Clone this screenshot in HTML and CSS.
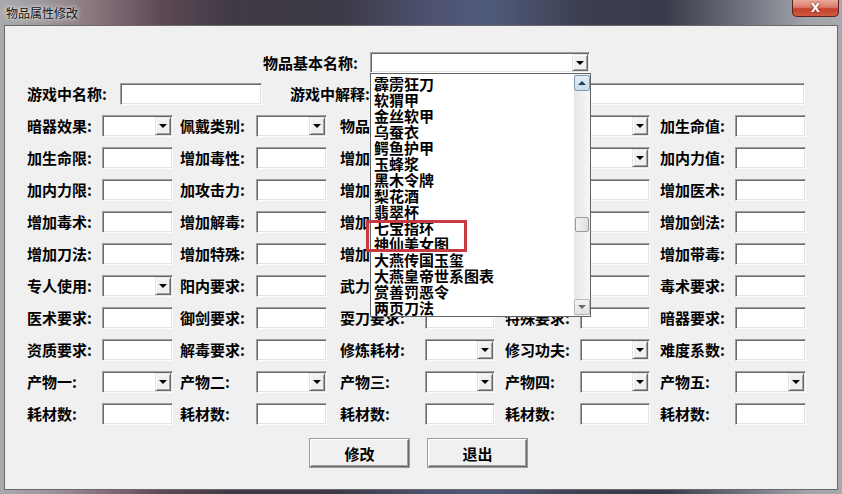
FILE: index.html
```html
<!DOCTYPE html>
<html>

<head>
    <title>物品属性修改</title>
    <meta charset="utf-8">
    <link rel="stylesheet" href="styles.css">
</head>

<body>
    <div class="window">
        <div class="titlebar">
            <span class="title">物品属性修改</span>
            <button class="close">X</button>
        </div>

        <div class="client">

            <div class="namerow">
                <span class="lbl">物品基本名称:</span>
                <div class="box combo big">
                    <span class="arrow"></span>

                    <div class="list">
                        <ul class="items">
                            <li>霹雳狂刀</li>
                            <li>软猬甲</li>
                            <li>金丝软甲</li>
                            <li>乌蚕衣</li>
                            <li>鳄鱼护甲</li>
                            <li>玉蜂浆</li>
                            <li>黑木令牌</li>
                            <li>梨花酒</li>
                            <li>翡翠杯</li>
                            <li>七宝指环</li>
                            <li>神仙美女图</li>
                            <li>大燕传国玉玺</li>
                            <li>大燕皇帝世系图表</li>
                            <li>赏善罚恶令</li>
                            <li>两页刀法</li>
                        </ul>
                        <div class="scroll">
                            <span class="sbtn up"></span>
                            <span class="thumb"></span>
                            <span class="sbtn down"></span>
                        </div>
                    </div>
                    <div class="mark"></div>
                </div>
            </div>

            <div class="row wide">
                <span class="lbl">游戏中名称:</span>
                <input class="box" type="text">
                <span class="lbl">游戏中解释:</span>
                <input class="box" type="text">
            </div>

            <div class="row">
                <span class="lbl">暗器效果:</span>
                <div class="box combo"><span class="arrow"></span></div>
                <span class="lbl">佩戴类别:</span>
                <div class="box combo"><span class="arrow"></span></div>
                <span class="lbl">物品类型:</span>
                <div class="box combo"><span class="arrow"></span></div>
                <span class="lbl">人物限制:</span>
                <div class="box combo"><span class="arrow"></span></div>
                <span class="lbl">加生命值:</span>
                <input class="box" type="text">
            </div>

            <div class="row">
                <span class="lbl">加生命限:</span>
                <input class="box" type="text">
                <span class="lbl">增加毒性:</span>
                <input class="box" type="text">
                <span class="lbl">增加体力:</span>
                <input class="box" type="text">
                <span class="lbl">内力性质:</span>
                <div class="box combo"><span class="arrow"></span></div>
                <span class="lbl">加内力值:</span>
                <input class="box" type="text">
            </div>

            <div class="row">
                <span class="lbl">加内力限:</span>
                <input class="box" type="text">
                <span class="lbl">加攻击力:</span>
                <input class="box" type="text">
                <span class="lbl">增加轻功:</span>
                <input class="box" type="text">
                <span class="lbl">增加防御:</span>
                <input class="box" type="text">
                <span class="lbl">增加医术:</span>
                <input class="box" type="text">
            </div>

            <div class="row">
                <span class="lbl">增加毒术:</span>
                <input class="box" type="text">
                <span class="lbl">增加解毒:</span>
                <input class="box" type="text">
                <span class="lbl">增加抗毒:</span>
                <input class="box" type="text">
                <span class="lbl">增加拳掌:</span>
                <input class="box" type="text">
                <span class="lbl">增加剑法:</span>
                <input class="box" type="text">
            </div>

            <div class="row">
                <span class="lbl">增加刀法:</span>
                <input class="box" type="text">
                <span class="lbl">增加特殊:</span>
                <input class="box" type="text">
                <span class="lbl">增加暗器:</span>
                <input class="box" type="text">
                <span class="lbl">增加常识:</span>
                <input class="box" type="text">
                <span class="lbl">增加带毒:</span>
                <input class="box" type="text">
            </div>

            <div class="row">
                <span class="lbl">专人使用:</span>
                <div class="box combo"><span class="arrow"></span></div>
                <span class="lbl">阳内要求:</span>
                <input class="box" type="text">
                <span class="lbl">武力要求:</span>
                <input class="box" type="text">
                <span class="lbl">轻功要求:</span>
                <input class="box" type="text">
                <span class="lbl">毒术要求:</span>
                <input class="box" type="text">
            </div>

            <div class="row">
                <span class="lbl">医术要求:</span>
                <input class="box" type="text">
                <span class="lbl">御剑要求:</span>
                <input class="box" type="text">
                <span class="lbl">耍刀要求:</span>
                <input class="box" type="text">
                <span class="lbl">特殊要求:</span>
                <input class="box" type="text">
                <span class="lbl">暗器要求:</span>
                <input class="box" type="text">
            </div>

            <div class="row">
                <span class="lbl">资质要求:</span>
                <input class="box" type="text">
                <span class="lbl">解毒要求:</span>
                <input class="box" type="text">
                <span class="lbl">修炼耗材:</span>
                <div class="box combo"><span class="arrow"></span></div>
                <span class="lbl">修习功夫:</span>
                <div class="box combo"><span class="arrow"></span></div>
                <span class="lbl">难度系数:</span>
                <input class="box" type="text">
            </div>

            <div class="row">
                <span class="lbl">产物一:</span>
                <div class="box combo"><span class="arrow"></span></div>
                <span class="lbl">产物二:</span>
                <div class="box combo"><span class="arrow"></span></div>
                <span class="lbl">产物三:</span>
                <div class="box combo"><span class="arrow"></span></div>
                <span class="lbl">产物四:</span>
                <div class="box combo"><span class="arrow"></span></div>
                <span class="lbl">产物五:</span>
                <div class="box combo"><span class="arrow"></span></div>
            </div>

            <div class="row">
                <span class="lbl">耗材数:</span>
                <input class="box" type="text">
                <span class="lbl">耗材数:</span>
                <input class="box" type="text">
                <span class="lbl">耗材数:</span>
                <input class="box" type="text">
                <span class="lbl">耗材数:</span>
                <input class="box" type="text">
                <span class="lbl">耗材数:</span>
                <input class="box" type="text">
            </div>

            <div class="actions">
                <button class="btn">修改</button>
                <button class="btn">退出</button>
            </div>

        </div>
    </div>
</body>

</html>
```

FILE: styles.css
```css
* {
    box-sizing: border-box;
}

body {
    margin: 0;
    font-family: "Noto Sans CJK SC", sans-serif;
}

.window {
    width: 842px;
    height: 494px;
    display: flex;
    flex-direction: column;
    padding: 0 4px 4px 4px;
    background: linear-gradient(90deg, #a9aaae 0%, #9a9498 6%, #86707a 12%, #5e4a56 19%, #413a46 27%, #3d3a47 40%, #4d5270 51%, #4f5b7b 58%, #3c3d4d 70%, #3a3b4a 79%, #6e707e 88%, #a2a3aa 96%, #a8a9ae 100%);
}

.titlebar {
    height: 25px;
    display: flex;
    justify-content: space-between;
    align-items: flex-start;
}

.title {
    font-size: 12px;
    line-height: 15px;
    color: #141414;
    padding: 5px 0 0 2px;
    text-shadow: 0 0 6px rgba(255, 255, 255, 0.9), 0 0 3px rgba(255, 255, 255, 0.7);
}

.close {
    width: 47px;
    height: 17px;
    margin-right: -1px;
    padding: 0;
    border: 1px solid #5e2219;
    border-top: none;
    border-radius: 0 0 5px 5px;
    background: linear-gradient(#e9ab9d, #da7a66 45%, #c4412d 55%, #cf5a40);
    color: #fff;
    font: bold 12px "DejaVu Sans", sans-serif;
    line-height: 16px;
    text-shadow: 0 0 2px #5a1a12;
}

.client {
    flex: 1;
    background-color: #f0f0f0;
    border: 1px solid #6a6a6a;
}

.lbl {
    font-size: 15px;
    font-weight: 700;
    color: #000;
    white-space: nowrap;
    line-height: 22px;
}

.box {
    height: 22px;
    width: 100%;
    margin: 0;
    padding: 0;
    background-color: #fff;
    border: 1px solid;
    border-color: #a0a0a0 #fdfdfd #fdfdfd #a0a0a0;
    box-shadow: inset 1px 1px 0 #6a6a6a, inset -1px -1px 0 #e3e3e3;
    font-family: inherit;
    outline: none;
}

.combo {
    display: flex;
    justify-content: flex-end;
    padding: 1px;
}

.arrow {
    width: 16px;
    height: 100%;
    display: flex;
    align-items: center;
    justify-content: center;
    background-color: #f0f0f0;
    border: 1px solid;
    border-color: #e3e3e3 #6a6a6a #6a6a6a #e3e3e3;
    box-shadow: inset 1px 1px 0 #fff, inset -1px -1px 0 #a0a0a0;
}

.arrow::after {
    content: "";
    width: 0;
    height: 0;
    border-left: 4px solid transparent;
    border-right: 4px solid transparent;
    border-top: 4px solid #000;
}

/* top combobox with open list */

.namerow {
    display: flex;
    align-items: center;
    height: 21px;
    margin-top: 26px;
    padding-left: 258px;
}

.namerow .lbl {
    width: 107px;
}

.big {
    position: relative;
    width: 220px;
    height: 21px;
}

.list {
    position: absolute;
    top: 20px;
    left: -1px;
    width: 221px;
    height: 244px;
    display: flex;
    background-color: #fff;
    border: 1px solid #646464;
    z-index: 2;
}

.items {
    flex: 1;
    list-style: none;
    margin: 0;
    padding: 2px 0 0 3px;
}

.items li {
    font-size: 15px;
    font-weight: 700;
    line-height: 16px;
    height: 16px;
    white-space: nowrap;
}

.scroll {
    width: 16px;
    display: flex;
    flex-direction: column;
    background: linear-gradient(90deg, #e8e8e8, #f6f6f6);
}

.sbtn {
    height: 16px;
    display: flex;
    align-items: center;
    justify-content: center;
    border: 1px solid #a6b4c4;
    border-radius: 2px;
}

.up {
    margin-top: 1px;
    background: linear-gradient(#e4eef8, #c8dcee);
    border-color: #7d98b4;
}

.up::after {
    content: "";
    border-left: 4px solid transparent;
    border-right: 4px solid transparent;
    border-bottom: 4px solid #2a3e54;
}

.down {
    margin-top: auto;
    margin-bottom: 1px;
    background: linear-gradient(#f4f4f4, #e2e2e2);
    border-color: #b8b8b8;
}

.down::after {
    content: "";
    border-left: 4px solid transparent;
    border-right: 4px solid transparent;
    border-top: 4px solid #6a6a6a;
}

.thumb {
    height: 15px;
    margin: 126px 1px 0 1px;
    background: linear-gradient(90deg, #f2f2f2, #dedede);
    border: 1px solid #9a9a9a;
    border-radius: 2px;
}

.mark {
    position: absolute;
    left: -5px;
    top: 167px;
    width: 101px;
    height: 32px;
    border: 3px solid #c63a40;
    z-index: 3;
}

/* grid rows */

.row {
    display: grid;
    grid-template-columns: 75px 71px 83px 71px 98px 70px 85px 70px 85px 71px;
    align-items: center;
    height: 22px;
    margin-top: 10px;
    padding-left: 22px;
}

.row .lbl:nth-child(3) {
    padding-left: 7px;
}

.row .lbl:nth-child(5) {
    padding-left: 13px;
}

.row .lbl:nth-child(7),
.row .lbl:nth-child(9) {
    padding-left: 10px;
}

.row.wide {
    grid-template-columns: 93px 142px 110px 433px;
}

.row.wide .lbl:nth-child(3) {
    padding-left: 28px;
}

.actions {
    display: flex;
    gap: 19px;
    margin-top: 14px;
    padding-left: 305px;
}

.btn {
    width: 99px;
    height: 28px;
    padding: 0;
    background-color: #f0f0f0;
    border: 1px solid;
    border-color: #fff #6a6a6a #6a6a6a #fff;
    box-shadow: inset -1px -1px 0 #a0a0a0, 0 0 0 1px #9a9a9a;
    font-family: inherit;
    font-size: 15px;
    font-weight: 700;
    color: #000;
}
```
